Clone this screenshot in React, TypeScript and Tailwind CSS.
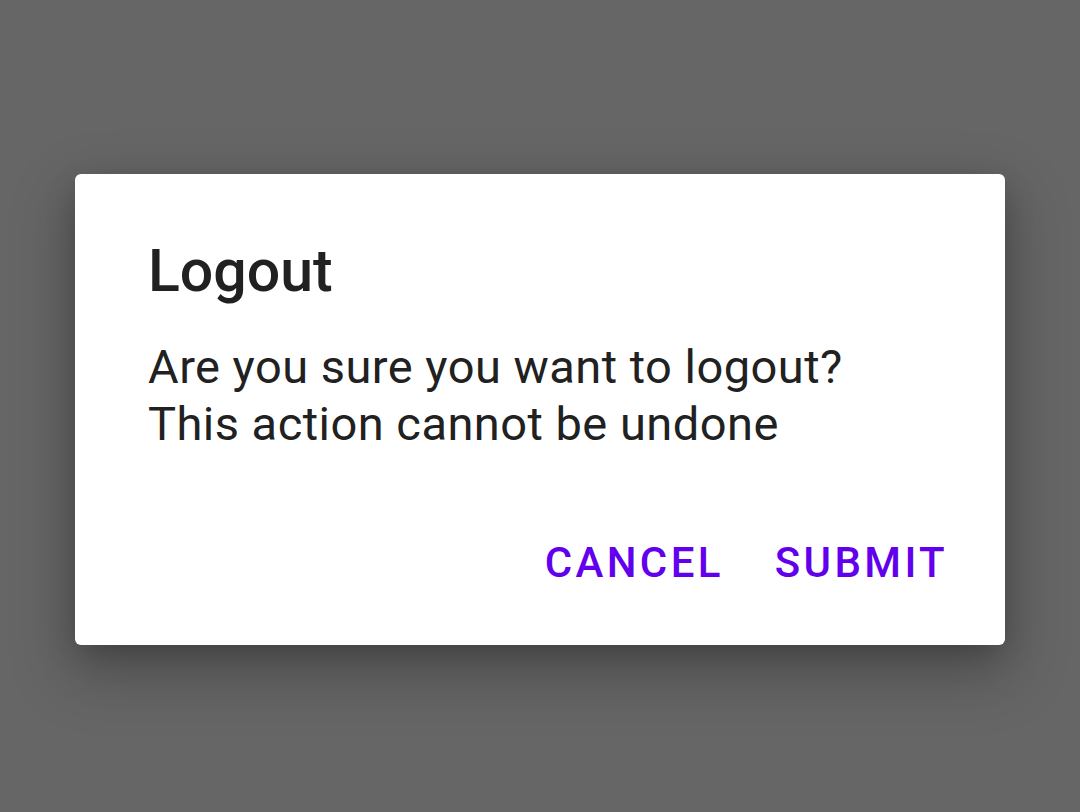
export default function App() {
  return (
    <div className="w-[1080px] h-[812px] bg-[#666666] flex items-start justify-center pt-[174px] font-['Roboto',sans-serif]">
      {/* Dialog */}
      <div className="w-[930px] h-[471px] bg-white rounded-[6px] flex flex-col shadow-[0_24px_60px_8px_rgba(0,0,0,0.22),0_10px_30px_-6px_rgba(0,0,0,0.25)]">
        <div className="pt-[67px] px-[73px]">
          <h2 className="text-[59px] leading-[60px] font-medium text-[#212121]">Logout</h2>
          <p className="mt-[37px] text-[47px] leading-[57px] tracking-[0.01em] text-[#212121]">
            Are you sure you want to logout?
            <br />
            This action cannot be undone
          </p>
        </div>

        {/* Buttons */}
        <div className="mt-[90px] pr-[57px] flex justify-end gap-[51px]">
          <button className="text-[42px] leading-[42px] font-medium tracking-[0.08em] text-[#6200EE] uppercase">
            Cancel
          </button>
          <button className="text-[42px] leading-[42px] font-medium tracking-[0.08em] text-[#6200EE] uppercase">
            Submit
          </button>
        </div>
      </div>
    </div>
  );
}
